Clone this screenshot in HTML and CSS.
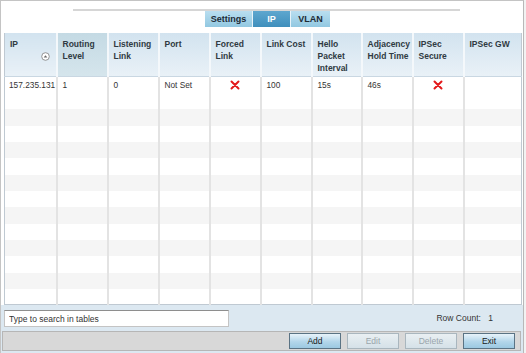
FILE: index.html
```html
<!DOCTYPE html>
<html lang="en">
<head>
  <meta charset="UTF-8">
  <title>IP Settings</title>
  <link rel="stylesheet" href="styles.css">
</head>
<body>
  <div class="panel">
    <div class="tab-area">
      <div class="tab-line">
        <div class="tabs">
          <div class="tab">Settings</div>
          <div class="tab active">IP</div>
          <div class="tab">VLAN</div>
        </div>
      </div>
    </div>

    <div class="grid-wrap">
      <table class="grid">
        <colgroup>
          <col style="width:52px"><col style="width:51px"><col style="width:51px"><col style="width:51px"><col style="width:51px">
          <col style="width:51px"><col style="width:50px"><col style="width:51px"><col style="width:51px"><col>
        </colgroup>
        <thead>
          <tr>
            <th>IP<span class="sort"><svg width="9" height="9" viewBox="0 0 9 9"><circle cx="4.5" cy="4.5" r="3.8" fill="#fff" stroke="#8a8a8a" stroke-width="0.9"/><path d="M2.7 5.6 L4.5 3.2 L6.3 5.6 Z" fill="#666"/></svg></span></th>
            <th class="sorted">Routing Level</th>
            <th>Listening Link</th>
            <th>Port</th>
            <th>Forced Link</th>
            <th>Link Cost</th>
            <th>Hello Packet Interval</th>
            <th>Adjacency Hold Time</th>
            <th>IPSec Secure</th>
            <th>IPSec GW</th>
          </tr>
        </thead>
        <tbody>
          <tr class="data">
            <td>157.235.131</td>
            <td>1</td>
            <td>0</td>
            <td>Not Set</td>
            <td class="mark"><svg class="cross" width="10" height="10" viewBox="0 0 10 10"><path d="M1.5 1.5 L8.5 8.5 M8.5 1.5 L1.5 8.5" stroke="#e3191b" stroke-width="2" stroke-linecap="round"/></svg></td>
            <td>100</td>
            <td>15s</td>
            <td>46s</td>
            <td class="mark"><svg class="cross" width="10" height="10" viewBox="0 0 10 10"><path d="M1.5 1.5 L8.5 8.5 M8.5 1.5 L1.5 8.5" stroke="#e3191b" stroke-width="2" stroke-linecap="round"/></svg></td>
            <td></td>
          </tr>
          <tr><td></td><td></td><td></td><td></td><td></td><td></td><td></td><td></td><td></td><td></td></tr>
          <tr><td></td><td></td><td></td><td></td><td></td><td></td><td></td><td></td><td></td><td></td></tr>
          <tr><td></td><td></td><td></td><td></td><td></td><td></td><td></td><td></td><td></td><td></td></tr>
          <tr><td></td><td></td><td></td><td></td><td></td><td></td><td></td><td></td><td></td><td></td></tr>
          <tr><td></td><td></td><td></td><td></td><td></td><td></td><td></td><td></td><td></td><td></td></tr>
          <tr><td></td><td></td><td></td><td></td><td></td><td></td><td></td><td></td><td></td><td></td></tr>
          <tr><td></td><td></td><td></td><td></td><td></td><td></td><td></td><td></td><td></td><td></td></tr>
          <tr><td></td><td></td><td></td><td></td><td></td><td></td><td></td><td></td><td></td><td></td></tr>
          <tr><td></td><td></td><td></td><td></td><td></td><td></td><td></td><td></td><td></td><td></td></tr>
          <tr><td></td><td></td><td></td><td></td><td></td><td></td><td></td><td></td><td></td><td></td></tr>
          <tr><td></td><td></td><td></td><td></td><td></td><td></td><td></td><td></td><td></td><td></td></tr>
          <tr><td></td><td></td><td></td><td></td><td></td><td></td><td></td><td></td><td></td><td></td></tr>
          <tr><td></td><td></td><td></td><td></td><td></td><td></td><td></td><td></td><td></td><td></td></tr>
        </tbody>
      </table>
    </div>

    <div class="search-bar">
      <input class="search" type="text" placeholder="Type to search in tables">
      <div class="row-count">Row Count: <span>1</span></div>
    </div>

    <div class="button-bar">
      <button class="btn">Add</button>
      <button class="btn" disabled>Edit</button>
      <button class="btn" disabled>Delete</button>
      <button class="btn">Exit</button>
    </div>
  </div>
</body>
</html>
```

FILE: styles.css
```css
body {
  margin: 0;
  background: #f2f2f2;
  font-family: "Liberation Sans", Arial, sans-serif;
  color: #333;
}

.panel {
  width: 522px;
  height: 352px;
  border-top: 1px solid #c4c4c4;
  border-left: 1px solid #c4c4c4;
  border-right: 1px solid #b8b8b8;
  background: #dce8f1;
  display: flex;
  flex-direction: column;
}

.tab-area {
  height: 32px;
  background: #fff;
  padding: 8px 0 0 72px;
  box-sizing: border-box;
}

.tab-line {
  width: 387px;
  border-top: 2px solid #d6d6d6;
  display: flex;
  justify-content: center;
}

.tabs {
  display: flex;
  height: 16px;
  margin-left: 2px;
}

.tab {
  font-size: 9px;
  font-weight: bold;
  color: #1d2b36;
  line-height: 16px;
  text-align: center;
  background: linear-gradient(#b9def0, #92c8e1);
  border-right: 1px solid #e8f3f9;
}

.tab:nth-child(1) { width: 47px; }
.tab:nth-child(2) { width: 37px; }
.tab:nth-child(3) { width: 39px; border-right: 0; }

.tab.active {
  background: linear-gradient(#5ea7cf, #3f8fbc);
  color: #fff;
}

.grid-wrap {
  background: #fff;
  padding: 0 2px 0 3px;
  height: 272px;
  box-sizing: border-box;
}

.grid {
  width: 518px;
  border-collapse: collapse;
  table-layout: fixed;
  border: 1px solid #bfc9d2;
  border-top: 0;
}

.grid th {
  height: 43px;
  padding: 5px 1px 0 5px;
  box-sizing: border-box;
  vertical-align: top;
  text-align: left;
  font-size: 8.5px;
  line-height: 12px;
  font-weight: bold;
  color: #2f3a42;
  background: linear-gradient(#d2e3ef, #e9f1f7);
  border-left: 2px solid #f4f8fb;
  border-bottom: 1px solid #c9d7e2;
  position: relative;
}

.grid th:first-child { border-left: 0; }

.grid th.sorted {
  background: linear-gradient(#c4dae4, #d5e5ec);
}

.sort {
  position: absolute;
  left: 36px;
  top: 19px;
}

.grid td {
  height: 16.35px;
  padding: 0 5px;
  font-size: 8.3px;
  color: #333;
  white-space: nowrap;
  overflow: hidden;
  border-left: 2px solid #e3e3e3;
}

.grid td:first-child { border-left: 0; padding-left: 4px; }

.grid tbody tr:nth-child(odd) td { background: #f5f5f5; }
.grid tbody tr.data td { background: #fff; }

.grid td.mark { text-align: center; }

.cross {
  display: block;
  margin: 0 auto;
}

.grid tbody tr:last-child td { height: 15px; }

.search-bar {
  height: 26px;
  padding: 5px 0 0 3px;
  box-sizing: border-box;
  display: flex;
  align-items: flex-start;
}

.search {
  width: 225px;
  height: 17px;
  box-sizing: border-box;
  border: 1px solid #c4c4c4;
  border-top-color: #8e8e8e;
  padding: 0 4px;
  font-family: "Liberation Sans", Arial, sans-serif;
  font-size: 8.5px;
  background: #fff;
}

.search::placeholder { color: #333; }

.row-count {
  margin-left: auto;
  margin-right: 30px;
  font-size: 8.5px;
  line-height: 17px;
  color: #333;
}

.row-count span { margin-left: 5px; }

.button-bar {
  height: 20px;
  margin: 0 0 0 1px;
  width: 519px;
  box-sizing: border-box;
  background: #d8d8d8;
  border: 1px solid #b6b6b6;
  display: flex;
  justify-content: flex-end;
  align-items: center;
  gap: 6px;
  padding-right: 5px;
}

.btn {
  width: 52px;
  height: 16px;
  padding: 0;
  font-family: "Liberation Sans", Arial, sans-serif;
  font-size: 8.5px;
  color: #1a1a1a;
  border: 1px solid #5a7384;
  background: linear-gradient(#e8f3fa, #b3d6ea 55%, #9cc9e1);
}

.btn:disabled {
  color: #9aa5ab;
  border-color: #a9b6be;
  background: linear-gradient(#e9eff2, #d5e1e8);
}
```
